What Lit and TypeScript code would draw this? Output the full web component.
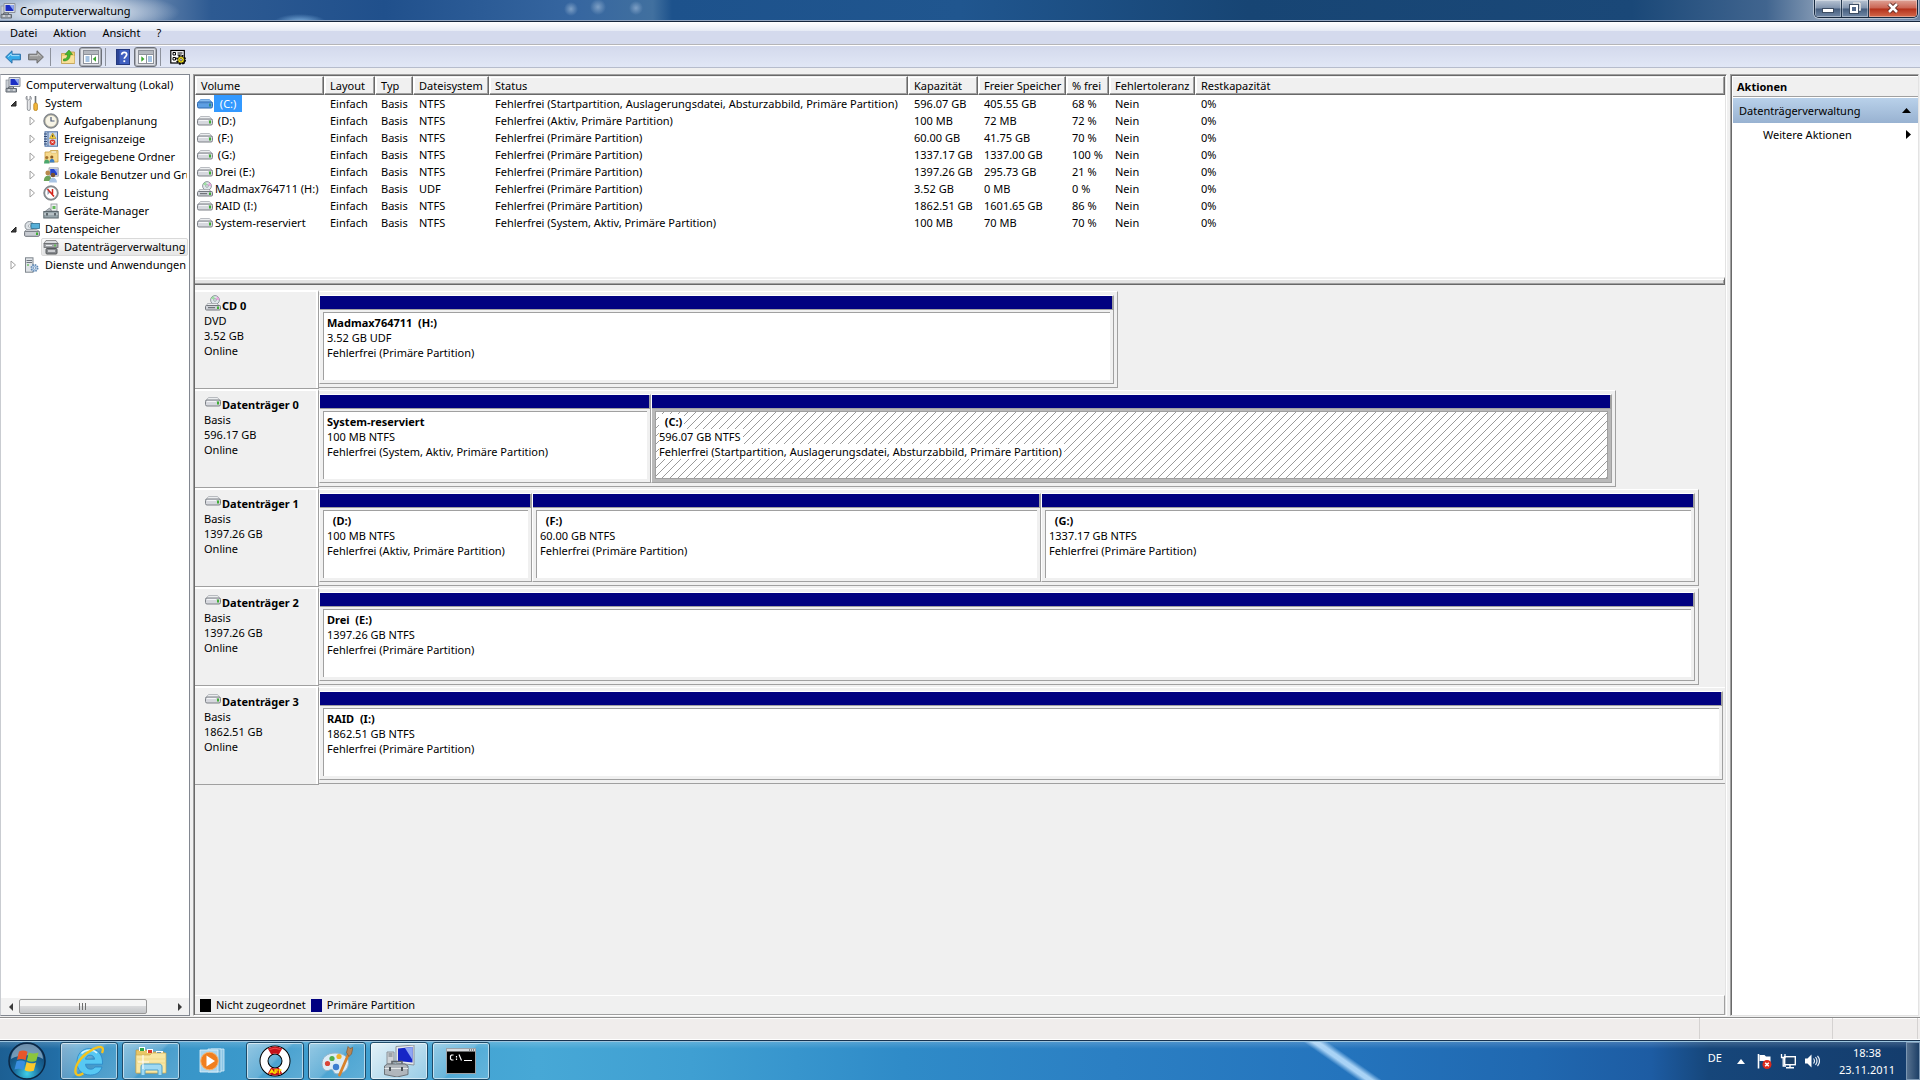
import { LitElement, html, css, svg, nothing, type TemplateResult } from "lit";
import { customElement, property } from "lit/decorators.js";
import { classMap } from "lit/directives/class-map.js";
import { styleMap } from "lit/directives/style-map.js";

/* ---------- icons ---------- */

const pic = (size: number, body: TemplateResult | TemplateResult[]) =>
  html`<svg class="ico" width=${size} height=${size} viewBox="0 0 ${size} ${size}" aria-hidden="true">${body}</svg>`;

const monitorBody = svg`
  <rect x="1" y="3" width="4" height="8" fill="#c9ced4" stroke="#7d858e" stroke-width=".6"/>
  <path d="M4 .5h11v9H4z" fill="#dfe3e8" stroke="#8a9099"/>
  <path d="M5.500 2h8v6h-8z" fill="#1c2fc4"/>
  <path d="M9.500 2h4v5.500z" fill="#8fa8f0"/>
  <path d="M1 11.500h10.500V15H1z" fill="#a4abb3" stroke="#646b73"/>
  <path d="M3.500 11.500V10h5v1.500" fill="none" stroke="#646b73"/>
  <path d="M3 13h2M8 13h2" stroke="#f4f4f4"/>`;

const driveBody = svg`
  <path d="M3.500 3.500h9l3 3.500H.5z" fill="#eceef0" stroke="#a9adb2" stroke-width=".8"/>
  <rect x=".5" y="6" width="15" height="6" rx="1.500" fill="#d6d8de" stroke="#7c8086"/>
  <path d="M2 7.500h9" stroke="#f5f6f8"/>
  <rect class="led" x="12" y="7.500" width="2" height="3" fill="#3fae35"/>`;

const discBody = svg`
  <circle cx="10" cy="5" r="4.400" fill="#dfe6ea" stroke="#8f979d"/>
  <path d="M10 5 12.500 1.500A4.400 4.400 0 0 1 14.300 5z" fill="#e8a6dc"/>
  <path d="M10 5 6 3.500A4.400 4.400 0 0 1 9 .9z" fill="#9ddfa0"/>
  <circle cx="10" cy="5" r="1.300" fill="#fff" stroke="#9aa"/>
  <path d="M2.500 8.500h9l3 2h-13z" fill="#eceef0" stroke="#9a9ea3" stroke-width=".7"/>
  <rect x=".5" y="10.500" width="15" height="4.500" rx="1" fill="#cfd2d8" stroke="#74787e"/>
  <path d="M3 12.700h7" stroke="#5c6066"/>
  <rect x="12" y="11.500" width="2" height="2.500" fill="#3fae35"/>`;

const icons = {
  computer: pic(16, monitorBody),
  drive: pic(16, driveBody),
  disc: pic(16, discBody),
  tools: pic(16, svg`
    <path d="M3 1v3l1.500 1L6 4V1c1.500.8 2 3 .3 4.700V14a1.500 1.500 0 0 1-3 0V5.700C1.500 4 1.700 1.800 3 1z" fill="#e6e8ea" stroke="#7d8288" stroke-width=".8"/>
    <path d="M11.500 1v7" stroke="#70757b" stroke-width="1.600"/>
    <rect x="9.800" y="8" width="3.600" height="7.500" rx="1.500" fill="#f3b73a" stroke="#b9811a" stroke-width=".8"/>`),
  clock: pic(16, svg`
    <circle cx="8" cy="8" r="7.300" fill="#8d9297" stroke="#62676c" stroke-width=".6"/>
    <circle cx="8" cy="8" r="5.800" fill="#f7f4e6" stroke="#c9c3a8" stroke-width=".6"/>
    <path d="M8 4v4h3.500" fill="none" stroke="#4d5a78" stroke-width="1.200"/>`),
  log: pic(16, svg`
    <rect x="2" y=".8" width="12.500" height="14.400" fill="#c8d7ea" stroke="#4b6ea4"/>
    <path d="M5 1v14" stroke="#4b6ea4"/>
    <path d="M1 3h3M1 5.500h3M1 8h3M1 10.500h3M1 13h3" stroke="#2f4875"/>
    <path d="m9.700 2 3.300 5.500H6.500z" fill="#f8d33c" stroke="#b58c12" stroke-width=".6"/>
    <path d="M9.700 3.800v2.400" stroke="#333"/>
    <circle cx="9.500" cy="11.200" r="2.800" fill="#d8362b"/><path d="m8.400 10.100 2.200 2.200m0-2.200-2.200 2.200" stroke="#fff" stroke-width=".9"/>`),
  share: pic(16, svg`
    <path d="M2 3h4.500l1-1.500H15V13H2z" fill="#f7d98c" stroke="#c89f41" stroke-width=".8"/>
    <path d="M8 2h5.500v2H8z" fill="#fff7d8" stroke="#c8a860" stroke-width=".5"/>
    <circle cx="3.800" cy="8.500" r="1.600" fill="#a5722e"/><path d="M1 14.500c0-5.500 5.600-5.500 5.600 0z" fill="#4ba86d"/>
    <circle cx="8.800" cy="8" r="1.600" fill="#8a5a22"/><path d="M6.500 13.500c0-5 5-5 5 0z" fill="#3f7fc4"/>`),
  users: pic(16, svg`
    <path d="M6 .8h9.300v8.400H6z" fill="#dde1e6" stroke="#8a9099" stroke-width=".7"/>
    <path d="M7.200 2h7v6h-7z" fill="#2444cc"/><path d="M11 2h3.200v4.500z" fill="#8fa8f0"/>
    <circle cx="4.800" cy="6" r="2.400" fill="#b98a4e"/><path d="M.8 14c0-7 8-7 8 0z" fill="#6ba35a"/>
    <circle cx="10" cy="8" r="2.300" fill="#7a5130"/><path d="M6 15.500c0-6.500 8-6.500 8 0z" fill="#a9c4e4"/>`),
  gauge: pic(16, svg`
    <circle cx="8" cy="8" r="7.300" fill="#8d9297" stroke="#62676c" stroke-width=".6"/>
    <circle cx="8" cy="8" r="5.800" fill="#fff"/>
    <path d="M4.500 5v5l3-3z" fill="#2b3f66" opacity=".5"/>
    <path d="m4.500 4 6.500 7.500M9.500 4v5" stroke="#d3231b" stroke-width="1.500"/>`),
  device: pic(16, svg`
    <rect x="8" y="1" width="6" height="7" fill="#eef0f2" stroke="#8b9197" stroke-width=".8"/>
    <path d="M9.500 3h3v3h-3z" fill="#63b95a"/>
    <path d="M2 8.500 6.500 5l2 3z" fill="#b9bec4" stroke="#767c82" stroke-width=".7"/>
    <rect x=".8" y="8.500" width="14.400" height="6.500" fill="#98a6ac" stroke="#5d686e"/>
    <path d="M1 11h14" stroke="#d5dbde"/><path d="M4 10v2.500M12 10v2.500" stroke="#3f484d" stroke-width="1.500"/>`),
  storage: pic(16, svg`
    <circle cx="5.500" cy="5" r="4.500" fill="#dde2e6" stroke="#868d94"/><circle cx="5.500" cy="5" r="1.200" fill="#fff" stroke="#868d94" stroke-width=".6"/>
    <rect x="7" y="2.500" width="8.500" height="5" fill="#57b0d8" stroke="#2f6f91" stroke-width=".8"/>
    <path d="M2.500 8.500h10l3 2H.5z" fill="#e4e6ea" stroke="#8d9299" stroke-width=".7"/>
    <rect x=".6" y="10.300" width="14.800" height="5" rx="1" fill="#c8ccd2" stroke="#6c7178"/>
    <rect x="12" y="11.500" width="2" height="2.500" fill="#3fae35"/>`),
  diskmgr: pic(16, svg`
    <path d="M3 1.500h10l2 3H1z" fill="#d8dadd" stroke="#777" stroke-width=".8"/>
    <rect x="1" y="4.500" width="14" height="4" fill="#a0a3a7" stroke="#66696d" stroke-width=".8"/>
    <path d="M3 6.500h6" stroke="#eceef0"/><path d="M12 5.500v2" stroke="#53c43d" stroke-width="1.500"/>
    <rect x="3" y="9.500" width="11" height="5.500" rx="1" fill="#85888c" stroke="#55585b"/>
    <path d="M1 9v6M5 12h7" stroke="#dfe1e3" stroke-width="1.500"/>`),
  server: pic(16, svg`
    <rect x="1.500" y=".8" width="7.500" height="14.400" fill="#dfe3e7" stroke="#7f868d"/>
    <path d="M2.500 3.500h5.500M2.500 5.500h5.500" stroke="#6d757d"/><path d="M3 8h2" stroke="#3fae35"/>
    <circle cx="10.500" cy="11" r="3.200" fill="#bdd3ea" stroke="#5f87b2" stroke-width="1.600" stroke-dasharray="1.500 1"/>
    <circle cx="10.500" cy="11" r="1.200" fill="#fff" stroke="#5f87b2" stroke-width=".7"/>`),
  back: pic(16, svg`<path d="M.6 8 7 1.800v3.400h8.400v5.600H7v3.400z" fill="#35a9e8" stroke="#2a6ea8"/><path d="M3 7.800 6.300 4.800v1.800h8" fill="none" stroke="#a4dcfa"/>`),
  forward: pic(16, svg`<path d="M15.400 8 9 1.800v3.400H.6v5.600H9v3.400z" fill="#9a9a9a" stroke="#6a6a6a"/><path d="M2 6.700h8V4.800l2.500 2.500" fill="none" stroke="#c9c9c9"/>`),
  folderUp: pic(16, svg`
    <path d="M1.500 4.500h5l1-1.500h7v11.500h-13z" fill="#f2cf72" stroke="#bd9a4a" stroke-width=".8"/>
    <path d="M2 7h12.300v7H2z" fill="#f9e09a"/>
    <path d="M3.500 10c3 0 4-1.500 4-4.500H5L9 1l3.500 4.500H10.200c0 4-2 6.500-6.700 6.500z" fill="#46b82f" stroke="#2d8420" stroke-width=".6"/>`),
  paneLeft: pic(16, svg`
    <rect x=".5" y="1.500" width="15" height="13" fill="#fff" stroke="#8d9199"/><path d="M1 2h14v3H1z" fill="#b3b7be"/>
    <path d="M1 5.500h14M8.500 6v8" stroke="#8d9199"/><path d="M2.500 8h4M2.500 10h4M2.500 12h4" stroke="#4a86c5"/>
    <path d="m9.800 10 3.200-2.800v5.600z" fill="#3aa52c"/>`),
  paneRight: pic(16, svg`
    <rect x=".5" y="1.500" width="15" height="13" fill="#fff" stroke="#8d9199"/><path d="M1 2h14v3H1z" fill="#b3b7be"/>
    <path d="M1 5.500h14M8.500 6v8" stroke="#8d9199"/><path d="M10 8h4M10 10h4M10 12h4" stroke="#4a86c5"/>
    <path d="M6.500 10 3.300 7.200v5.600z" fill="#3aa52c"/>`),
  help: pic(16, svg`
    <rect x="1.500" y=".5" width="13" height="15" fill="#3f5fc0" stroke="#24397f"/><path d="M2 1h2.500v14H2z" fill="#2b4496"/>
    <path d="M6.700 5.800c0-3.300 5-3 5-.2 0 2-2.400 1.900-2.400 4.200" fill="none" stroke="#fff" stroke-width="1.700"/><rect x="8.400" y="11.300" width="1.800" height="1.800" fill="#fff"/>`),
  settings: pic(16, svg`
    <rect x=".8" y="1.500" width="13.500" height="12.500" fill="#fff" stroke="#000" stroke-width="1.200"/>
    <path d="M3 3.500h2.500v2.500H3zM3 8.500h2.500v2.500H3z" fill="none" stroke="#000"/><path d="M7.500 4h5M7.500 6h4" stroke="#000"/>
    <circle cx="11" cy="10.800" r="3.800" fill="none" stroke="#000" stroke-width="2.400" stroke-dasharray="1.700 1.300"/>
    <circle cx="11" cy="10.800" r="3.300" fill="#f6e21c" stroke="#000" stroke-width=".6"/><circle cx="11" cy="10.800" r="1.200" fill="#fff" stroke="#000" stroke-width=".6"/>`),

  start: html`<svg class="ico" width="40" height="38" viewBox="0 0 40 38" aria-hidden="true">
    <defs><radialGradient id="orb" cx=".5" cy=".85" r=".8"><stop offset="0" stop-color="#3fd0e8"/><stop offset=".45" stop-color="#1a6c9e"/><stop offset="1" stop-color="#0f3b66"/></radialGradient></defs>
    <circle cx="20" cy="19" r="18" fill="url(#orb)" stroke="#0b2744" stroke-width="1.500"/>
    <path d="M4 17a16 15 0 0 1 32 0c-8-5-24-5-32 0z" fill="#cfe4f2" opacity=".5"/>
    <path d="M12 9.500c3-1.500 5.700-1.300 8.500.3l-2 8.400c-2.500-1.600-5.500-1.700-8.500-.4z" fill="#e8562a"/>
    <path d="M21.800 10.400c3 1.500 6 1.500 9.700.1l-2.200 8.300c-3 1.300-6.500 1.200-9.400-.3z" fill="#8cc63c"/>
    <path d="M9.600 19.300c3-1.300 6-1.200 8.600.4L16.200 28c-2.500-1.600-5.500-1.600-8.700-.4z" fill="#3a8ee0"/>
    <path d="M19.600 20c3 1.600 6.200 1.600 9.400.4L26.800 28.700c-3 1.200-6.300 1.100-9.200-.4z" fill="#fbc92d"/></svg>`,
  ie: pic(32, svg`
    <path d="M16.500 3.500C9 3.500 4 9 4 17s5 13 13.500 13c5.700 0 10-2.800 11.500-8h-7c-.8 1.400-2.200 2.200-4.300 2.200-3.100 0-5-1.900-5.200-5H29.500C30 10 25 3.500 16.500 3.500zM12.600 14.200c.4-2.500 2-4 4.500-4 2.600 0 4.200 1.500 4.500 4z" fill="#57c8f3" stroke="#2a86c8" stroke-width=".8"/>
    <path d="M8.500 8.500c3.500-4 12-4.500 15.500-.5" fill="none" stroke="#d6f4fe" stroke-width="1.600"/>
    <path d="M29 8C31 3.500 29.500 1 25 2.200 18 4 8.500 11 4.500 18.500 1 25.500 2 31 6.500 30c1.300-.3 2.500-.9 3.800-1.800" fill="none" stroke="#f4c31e" stroke-width="2.400"/>`),
  explorer: pic(32, svg`
    <path d="M1 5h10l2 2h16v21H1z" fill="#e9c766" stroke="#b99642" stroke-width=".7"/>
    <rect x="4" y="2" width="6" height="4" fill="#fff"/><rect x="5" y="3" width="4" height="3" fill="#2da747"/>
    <rect x="12" y="4" width="6" height="4" fill="#fff"/><rect x="13" y="5" width="4" height="3" fill="#d93a2b"/>
    <rect x="21" y="6" width="7" height="4" fill="#fff"/><rect x="22" y="7" width="4" height="2" fill="#3586d8"/>
    <path d="M1 10h14l2-2h14v20H1z" fill="#f8e7a4" stroke="#cfae57" stroke-width=".7"/>
    <path d="M1.500 14h29M1.500 18h29" stroke="#f0d98a"/>
    <path d="M6 30.500V22c0-2 1-3 3-3h15c2 0 3 1 3 3v8.500h-4V25H10v5.500z" fill="#9fd9f3" stroke="#4d9fc9"/>
    <path d="M8 10v14M3 17h11" stroke="#fff" stroke-width="1.200" opacity=".9"/>`),
  media: pic(32, svg`
    <path d="M14 4h13v22H14z" fill="#8cc6e6" stroke="#d6eef9" stroke-width=".8"/>
    <path d="M11 4h13v23H11z" fill="#70b4da" stroke="#d6eef9" stroke-width=".8"/>
    <path d="M3 5h18v22H3z" fill="#a8d5ee" stroke="#e3f4fc" stroke-width=".8"/>
    <circle cx="12.500" cy="16" r="8.800" fill="#f07f1f" stroke="#f8b36d"/><path d="M9.500 10.500v11l8.500-5.500z" fill="#fff"/>`),
  ring: pic(32, svg`
    <circle cx="16" cy="16" r="11" fill="none" stroke="#000" stroke-width="9"/>
    <circle cx="16" cy="16" r="11" fill="none" stroke="#fff" stroke-width="7"/>
    <path d="M10.500 6.500a11 11 0 0 1 11 0M21.500 25.500a11 11 0 0 1-11 0" fill="none" stroke="#c4121a" stroke-width="7"/>
    <path d="M10.500 4.500a13 13 0 0 1 11 0" fill="none" stroke="#f24b4b"/>
    <path d="m10.500 28.500 2.300-3.500 2.300 3.500M11.500 27h3M16 29v-4h3M16 27h2.500M20.500 24.500v4M19.500 25h3" fill="none" stroke="#ffe600" stroke-width="1.300"/>`),
  paint: pic(32, svg`
    <path d="M14 8C6 8 1 12.500 1 18.500S5 27 8.500 25c2.500-1.500 4 .5 4.500 2.500 1 3 14 1.500 14.500-9C27.800 11.500 22 8 14 8z" fill="#dcecf6" stroke="#8fb3c9"/>
    <circle cx="6.500" cy="18.500" r="2.600" fill="#d94436"/><circle cx="11" cy="13.500" r="2.600" fill="#4fae4b"/>
    <circle cx="18" cy="11.500" r="2.600" fill="#f2b22b"/><circle cx="15" cy="22" r="3.200" fill="#3c7dd0"/>
    <path d="M28 8 18.500 30" stroke="#d9822b" stroke-width="2.800" stroke-linecap="round"/>
    <path d="m25.500 7.500 1.500-6 2 2 3-1-1.500 6.500-2.500 2.500z" fill="#b98553" stroke="#7a522c" stroke-width=".6"/>`),
  toolbox: pic(32, svg`
    <path d="M13 1.500 31 0v20l-18-2z" fill="#e6e9ec" stroke="#8c939a"/><path d="M15 3.500 29.500 2v15.500L15 16z" fill="#1626c6"/>
    <path d="M22 3 29.500 2v13z" fill="#8ea5f4"/>
    <path d="M4 7h7v12H4z" fill="#cfd3d7" stroke="#8c939a"/><path d="M5.500 9h4M5.500 11h4" stroke="#6d747b"/>
    <path d="M9 20v-3.500h10V20" fill="none" stroke="#5e656b" stroke-width="1.600"/>
    <path d="m1.500 21 3-2H22l3 2v8.500L14 32 1.500 29.500z" fill="#b0b6bc" stroke="#6b7278"/><path d="M1.500 23.500H25" stroke="#e6e9eb"/>
    <path d="M7 22v4M19 22v4" stroke="#4b5258" stroke-width="2"/>`),
  shell: html`<svg class="ico" width="32" height="32" viewBox="0 0 32 32" aria-hidden="true">
    <rect x="1.500" y="3.500" width="29" height="25" fill="#000" stroke="#9ba1a7"/><path d="M2 4h28v2.500H2z" fill="#d7dadd"/>
    <path d="M24 5h1M26 5h1M28 5h1" stroke="#333"/>
    <path d="M8.500 10H6.500L5.500 11v3l1 1h2M11.500 11v1.500M11.500 13.500V15M14 9.500l2.500 6M19 15.500h8" fill="none" stroke="#fff" stroke-width="1.200"/></svg>`,
  flag: pic(16, svg`
    <path d="M2.500 1v14.500" stroke="#fff" stroke-width="1.600"/><path d="M3.500 2h5l1.500 1.500h4.500v6H9L7.500 8h-4z" fill="#fff"/>
    <circle cx="11" cy="11.500" r="4.500" fill="#dd2a1b"/><path d="m9.200 9.700 3.600 3.600m0-3.600-3.600 3.600" stroke="#fff" stroke-width="1.500"/>`),
  network: pic(16, svg`
    <rect x="4.700" y="3.700" width="10.600" height="8" fill="#1b3f66" stroke="#fff" stroke-width="1.400"/>
    <path d="M10 12v2.500M6 14.800h8" stroke="#fff" stroke-width="1.400"/>
    <path d="M1.500 1v3.500h3.500V1M3.200 4.500V13H6" fill="none" stroke="#fff" stroke-width="1.300"/>`),
  sound: pic(16, svg`
    <path d="M1 5.500h2.500L7.500 1.500v13L3.500 10.500H1z" fill="#fff"/>
    <path d="M9.500 5.500q2 2.500 0 5M11.500 4q3 4 0 8M13.500 2.800q4 5.200 0 10.400" fill="none" stroke="#e6eef6" stroke-width="1.200"/>`),
};

type IconName = keyof typeof icons;

const base = css`
  *, *::before, *::after { box-sizing: border-box; }
  button {
    font: inherit; color: inherit; background: none; border: 0; padding: 0; margin: 0;
    text-align: left; cursor: default;
  }
  .ico { display: block; flex: none; }
  ul { list-style: none; margin: 0; padding: 0; }
`;

/* ---------- console tree ---------- */

interface TreeNode { label: string; icon: IconName; level: number; open?: boolean; leaf?: boolean; selected?: boolean; }

const TREE: TreeNode[] = [
  { label: "Computerverwaltung (Lokal)", icon: "computer", level: 0, leaf: true },
  { label: "System", icon: "tools", level: 1, open: true },
  { label: "Aufgabenplanung", icon: "clock", level: 2 },
  { label: "Ereignisanzeige", icon: "log", level: 2 },
  { label: "Freigegebene Ordner", icon: "share", level: 2 },
  { label: "Lokale Benutzer und Gruppen", icon: "users", level: 2 },
  { label: "Leistung", icon: "gauge", level: 2 },
  { label: "Geräte-Manager", icon: "device", level: 2, leaf: true },
  { label: "Datenspeicher", icon: "storage", level: 1, open: true },
  { label: "Datenträgerverwaltung", icon: "diskmgr", level: 2, leaf: true, selected: true },
  { label: "Dienste und Anwendungen", icon: "server", level: 1 },
];

@customElement("console-tree")
export class ConsoleTree extends LitElement {
  static styles = [base, css`
    :host { display: flex; flex-direction: column; background: #fff; border: 1px solid #828790; border-left-color: #c9ccd1; overflow: hidden; }
    .nodes { flex: 1; padding: 1px; }
    .node { display: flex; align-items: center; height: 18px; white-space: nowrap; }
    .l0 { padding-left: 1px; }
    .l1 { padding-left: 2px; }
    .l2 { padding-left: 21px; }
    .twist { width: 18px; flex: none; display: flex; justify-content: center; }
    .l0 .twist { display: none; }
    .item { display: flex; align-items: center; height: 18px; gap: 5px; padding: 0 1px; border: 1px solid transparent; flex: 1; min-width: 0; overflow: hidden; }
    .selected { border-color: #d9d9d9; border-radius: 2px; background: linear-gradient(#fafafa, #e6e6e6); }
    .bar { display: flex; align-items: center; height: 17px; background: #f2f2f2; padding: 0 1px; }
    .step { width: 17px; height: 17px; display: flex; align-items: center; justify-content: center; }
    .track { flex: 1; display: flex; height: 15px; }
    .thumb {
      width: 84%; height: 15px; border: 1px solid #979797; border-radius: 2px;
      background: linear-gradient(#f5f5f5 0 45%, #d9dadc 50%, #c4c6c9);
      display: flex; align-items: center; justify-content: center;
    }
  `];

  private twist(n: TreeNode) {
    if (n.leaf) return nothing;
    return n.open
      ? html`<svg width="8" height="8" viewBox="0 0 8 8" aria-hidden="true"><path d="M7 2v5H2z" fill="#404040" stroke="#222"/></svg>`
      : html`<svg width="8" height="10" viewBox="0 0 8 10" aria-hidden="true"><path d="M2 1v8l4.500-4z" fill="#fff" stroke="#a0a0a0"/></svg>`;
  }

  render() {
    return html`
      <ul class="nodes">
        ${TREE.map((n) => html`
          <li class="node l${n.level}">
            <span class="twist">${this.twist(n)}</span>
            <button class=${classMap({ item: true, selected: !!n.selected })}>${icons[n.icon]}<span>${n.label}</span></button>
          </li>`)}
      </ul>
      <div class="bar">
        <button class="step" aria-label="Links"><svg width="6" height="8" viewBox="0 0 6 8"><path d="M5 0v8L1 4z" fill="#3a3a3a"/></svg></button>
        <div class="track"><div class="thumb"><svg width="9" height="7" viewBox="0 0 9 7" aria-hidden="true"><path d="M1.500 0v7M4.500 0v7M7.500 0v7" stroke="#6d6d6d"/></svg></div></div>
        <button class="step" aria-label="Rechts"><svg width="6" height="8" viewBox="0 0 6 8"><path d="M1 0v8l4-4z" fill="#3a3a3a"/></svg></button>
      </div>`;
  }
}

/* ---------- volume list ---------- */

const COLUMNS: [string, number][] = [
  ["Volume", 129], ["Layout", 51], ["Typ", 38], ["Dateisystem", 76], ["Status", 419],
  ["Kapazität", 70], ["Freier Speicher", 88], ["% frei", 43], ["Fehlertoleranz", 86], ["Restkapazität", 0],
];

const VOLUMES: string[][] = [
  ["\u00a0(C:)", "Einfach", "Basis", "NTFS", "Fehlerfrei (Startpartition, Auslagerungsdatei, Absturzabbild, Primäre Partition)", "596.07 GB", "405.55 GB", "68 %", "Nein", "0%"],
  ["\u00a0(D:)", "Einfach", "Basis", "NTFS", "Fehlerfrei (Aktiv, Primäre Partition)", "100 MB", "72 MB", "72 %", "Nein", "0%"],
  ["\u00a0(F:)", "Einfach", "Basis", "NTFS", "Fehlerfrei (Primäre Partition)", "60.00 GB", "41.75 GB", "70 %", "Nein", "0%"],
  ["\u00a0(G:)", "Einfach", "Basis", "NTFS", "Fehlerfrei (Primäre Partition)", "1337.17 GB", "1337.00 GB", "100 %", "Nein", "0%"],
  ["Drei (E:)", "Einfach", "Basis", "NTFS", "Fehlerfrei (Primäre Partition)", "1397.26 GB", "295.73 GB", "21 %", "Nein", "0%"],
  ["Madmax764711 (H:)", "Einfach", "Basis", "UDF", "Fehlerfrei (Primäre Partition)", "3.52 GB", "0 MB", "0 %", "Nein", "0%"],
  ["RAID (I:)", "Einfach", "Basis", "NTFS", "Fehlerfrei (Primäre Partition)", "1862.51 GB", "1601.65 GB", "86 %", "Nein", "0%"],
  ["System-reserviert", "Einfach", "Basis", "NTFS", "Fehlerfrei (System, Aktiv, Primäre Partition)", "100 MB", "70 MB", "70 %", "Nein", "0%"],
];

@customElement("volume-list")
export class VolumeList extends LitElement {
  static styles = [base, css`
    :host { display: block; background: #fff; }
    table { width: 100%; border-collapse: separate; border-spacing: 0; table-layout: fixed; }
    th, td { white-space: nowrap; font-weight: 400; text-align: left; padding: 0 0 0 6px; }
    th {
      height: 19px; background: #f0f0f0; line-height: 16px; padding-left: 5px;
      border: 1px solid; border-color: #f0f0f0 #696969 #696969 #fff;
      box-shadow: inset -1px -1px #a0a0a0, inset 1px 1px #fff;
    }
    td { height: 17px; line-height: 17px; }
    td:first-child { padding-left: 2px; }
    .name { display: flex; align-items: center; gap: 1px; height: 17px; }
    .name span { padding: 0 1px; }
    .active span { background: #3399ff; color: #fff; padding: 0 6px 0 3px; }
    .active .ico path { fill: #8cc0f2; stroke: #5a96d6; }
    .active .ico rect { fill: #5d9fe4; stroke: #2f68ae; }
    .active .ico .led { fill: #2f8f86; stroke: none; }
  `];

  render() {
    return html`
      <table>
        <colgroup>${COLUMNS.map(([, w]) => html`<col style=${styleMap(w ? { width: `${w}px` } : {})}>`)}</colgroup>
        <thead><tr>${COLUMNS.map(([c]) => html`<th scope="col">${c}</th>`)}</tr></thead>
        <tbody>
          ${VOLUMES.map((row, r) => html`<tr>${row.map((cell, c) => c === 0
            ? html`<td><div class=${classMap({ name: true, active: r === 0 })}>${row[3] === "UDF" ? icons.disc : icons.drive}<span>${cell}</span></div></td>`
            : html`<td>${cell}</td>`)}</tr>`)}
        </tbody>
      </table>`;
  }
}

/* ---------- graphical disk view ---------- */

interface Partition { name: string; size: string; state: string; share: number; selected?: boolean; }
interface Disk { name: string; kind: string; size: string; icon: IconName; extent: number; parts: Partition[]; }

const FULL_EXTENT = 1406;

const DISKS: Disk[] = [
  { name: "CD 0", kind: "DVD", size: "3.52 GB", icon: "disc", extent: 799, parts: [
    { name: "Madmax764711\u00a0 (H:)", size: "3.52 GB UDF", state: "Fehlerfrei (Primäre Partition)", share: 1 }] },
  { name: "Datenträger 0", kind: "Basis", size: "596.17 GB", icon: "drive", extent: 1297, parts: [
    { name: "System-reserviert", size: "100 MB NTFS", state: "Fehlerfrei (System, Aktiv, Primäre Partition)", share: 332 },
    { name: "\u00a0\u00a0(C:)", size: "596.07 GB NTFS", state: "Fehlerfrei (Startpartition, Auslagerungsdatei, Absturzabbild, Primäre Partition)", share: 961, selected: true }] },
  { name: "Datenträger 1", kind: "Basis", size: "1397.26 GB", icon: "drive", extent: 1380, parts: [
    { name: "\u00a0\u00a0(D:)", size: "100 MB NTFS", state: "Fehlerfrei (Aktiv, Primäre Partition)", share: 213 },
    { name: "\u00a0\u00a0(F:)", size: "60.00 GB NTFS", state: "Fehlerfrei (Primäre Partition)", share: 509 },
    { name: "\u00a0\u00a0(G:)", size: "1337.17 GB NTFS", state: "Fehlerfrei (Primäre Partition)", share: 654 }] },
  { name: "Datenträger 2", kind: "Basis", size: "1397.26 GB", icon: "drive", extent: 1380, parts: [
    { name: "Drei\u00a0 (E:)", size: "1397.26 GB NTFS", state: "Fehlerfrei (Primäre Partition)", share: 1 }] },
  { name: "Datenträger 3", kind: "Basis", size: "1862.51 GB", icon: "drive", extent: 1406, parts: [
    { name: "RAID\u00a0 (I:)", size: "1862.51 GB NTFS", state: "Fehlerfrei (Primäre Partition)", share: 1 }] },
];

@customElement("disk-row")
export class DiskRow extends LitElement {
  @property({ attribute: false }) disk!: Disk;

  static styles = [base, css`
    :host { display: flex; height: 99px; line-height: 15px; }
    .label { width: 124px; flex: none; padding: 5px 0 0 9px; border-top: 2px solid #fff; border-bottom: 1px solid #a0a0a0; border-right: 1px solid #a0a0a0; box-shadow: inset -2px 0 #fff; }
    .title { display: flex; align-items: flex-end; gap: 1px; font-weight: 700; height: 16px; }
    .title .ico { margin: 0 0 2px 1px; }
    .map { flex: 1; display: grid; min-width: 0; }
    .disk { display: grid; padding: 3px 3px 3px 0; margin: 1px 0 1px; border-top: 1px solid #fff; border-right: 1px solid #a0a0a0; border-bottom: 1px solid #a0a0a0; min-width: 0; }
    .full { padding-right: 2px; border-right: 0; }
    .part { display: flex; flex-direction: column; min-width: 0; text-align: left; border: 1px solid; border-color: #fff #a0a0a0 #a0a0a0 #fff; white-space: nowrap; }
    .stripe { height: 14px; width: 100%; background: #000080; border-right: 1px solid #a0a0a0; border-bottom: 1px solid #a0a0a0; }
    .frame { flex: 1; width: 100%; padding: 2px 3px 3px 3px; display: flex; }
    .body { flex: 1; min-width: 0; overflow: hidden; display: flex; flex-direction: column; align-items: flex-start; background: #fff; border-top: 1px solid #a0a0a0; border-left: 1px solid #a0a0a0; padding: 2px 0 0 3px; }
    .selected .frame { background: #b9b9b9; }
    .selected .body {
      border: 1px solid #a0a0a0;
      background: #fff linear-gradient(135deg, transparent 45%, #9a9a9a 45% 55%, transparent 55%) 0 0 / 8px 8px;
    }
    .selected .body span { background: #fff; padding-right: 2px; }
    .name { font-weight: 700; }
  `];

  render() {
    const d = this.disk;
    const full = d.extent >= FULL_EXTENT;
    const cols = full ? "1fr" : `${d.extent}fr ${FULL_EXTENT - d.extent}fr`;
    return html`
      <div class="label">
        <div class="title">${icons[d.icon]}<span>${d.name}</span></div>
        <div>${d.kind}</div><div>${d.size}</div><div>Online</div>
      </div>
      <div class="map" style=${styleMap({ gridTemplateColumns: cols })}>
        <div class=${classMap({ disk: true, full })} style=${styleMap({ gridTemplateColumns: d.parts.map((p) => `${p.share}fr`).join(" ") })}>
          ${d.parts.map((p) => html`
            <button class=${classMap({ part: true, selected: !!p.selected })}>
              <span class="stripe"></span>
              <span class="frame"><span class="body"><span class="name">${p.name}</span><span>${p.size}</span><span>${p.state}</span></span></span>
            </button>`)}
        </div>
      </div>`;
  }
}

/* ---------- taskbar ---------- */

const TASKS: { icon: IconName; label: string; state: string }[] = [
  { icon: "ie", label: "Internet Explorer", state: "open" },
  { icon: "explorer", label: "Windows-Explorer", state: "open" },
  { icon: "media", label: "Windows Media Player", state: "pinned" },
  { icon: "ring", label: "Hilfsprogramm", state: "open" },
  { icon: "paint", label: "Paint", state: "open" },
  { icon: "toolbox", label: "Computerverwaltung", state: "open current" },
  { icon: "shell", label: "Eingabeaufforderung", state: "open" },
];

@customElement("task-bar")
export class TaskBar extends LitElement {
  static styles = [base, css`
    :host {
      display: flex; height: 40px; color: #fff; border-top: 1px solid #17324f; box-shadow: inset 0 1px #9cc4de;
      background:
        linear-gradient(#ffffff30, #ffffff00 20%),
        linear-gradient(35deg, transparent 42%, #a9d3f6 48% 52%, transparent 58%) 71% 0 / 100px 100% no-repeat,
        linear-gradient(90deg, #1c5f93 0, #226ea6 3%, #3490c4 4%, #3c9acc 14%, #47a8d6 28%, #3f9fd2 36%, #2f8bc8 47%, #2b7fc3 58%, #2474bd 70%, #2068b0 80%, #1d5ca3 86%, #16467a 89%, #143c6c 100%);
    }
    .start { width: 60px; display: flex; align-items: center; padding-left: 7px; }
    .tasks { display: flex; gap: 4px; flex: 1; }
    .task { width: 58px; height: 38px; margin-top: 1px; display: flex; align-items: center; justify-content: center; border: 1px solid transparent; border-radius: 3px; }
    .open { border-color: #1d4a68; box-shadow: inset 0 0 0 1px #ffffff8c; background: linear-gradient(135deg, #ffffff73, #ffffff38 48%, #ffffff14 52%, #ffffff2b); }
    .current { background: linear-gradient(135deg, #ffffffd9, #ffffffa6 50%, #ffffff73); }
    .tray { display: flex; align-items: center; gap: 8px; }
    .lang { padding: 0 6px 6px 0; }
    .up { width: 10px; display: flex; justify-content: center; padding-top: 2px; }
    .up + button { margin-left: 2px; }
    .clock { width: 78px; text-align: center; line-height: 17px; }
    .peek { width: 14px; align-self: stretch; margin-top: 1px; border: 1px solid #7c97b3; background: linear-gradient(90deg, #56718f, #1d3f66); }
  `];

  render() {
    return html`
      <button class="start" aria-label="Start">${icons.start}</button>
      <div class="tasks">${TASKS.map((t) => html`<button class="task ${t.state}" aria-label=${t.label}>${icons[t.icon]}</button>`)}</div>
      <div class="tray">
        <button class="lang">DE</button>
        <button class="up" aria-label="Ausgeblendete Symbole"><svg width="8" height="5" viewBox="0 0 8 5"><path d="M0 5h8L4 0z" fill="#fff"/></svg></button>
        <button aria-label="Wartungscenter">${icons.flag}</button>
        <button aria-label="Netzwerk">${icons.network}</button>
        <button aria-label="Lautstärke">${icons.sound}</button>
        <button class="clock"><div>18:38</div><div>23.11.2011</div></button>
      </div>
      <button class="peek" aria-label="Desktop anzeigen"></button>`;
  }
}

/* ---------- window ---------- */

@customElement("app-root")
export class AppRoot extends LitElement {
  static styles = [base, css`
    :host {
      display: flex; flex-direction: column; min-height: 100vh; background: #f0f0f0; color: #000;
      font: 11px/16px "Noto Sans", "Open Sans", sans-serif; box-sizing: border-box; overflow: hidden;
    }
    .titlebar {
      display: flex; align-items: center; height: 22px; padding: 0 2px 0 0; border-bottom: 1px solid #14253c; box-shadow: inset 0 -1px #8fa3be;
      background:
        radial-gradient(ellipse 110px 22px at 70px 12px, #d3ddea 0 40%, #d3ddea00 100%),
        radial-gradient(ellipse 26px 8px at 300px 22px, #7fb2e0 0, #7fb2e000 100%),
        radial-gradient(ellipse 7px 7px at 571px 9px, #7d9fc5 0, #7d9fc500 100%),
        radial-gradient(ellipse 8px 8px at 598px 7px, #7d9fc5 0, #7d9fc500 100%),
        radial-gradient(ellipse 7px 7px at 636px 8px, #7d9fc5 0, #7d9fc500 100%),
        linear-gradient(90deg, #8ea5c2 0, #5f80aa 8%, #2d5a92 11%, #20508c 20%, #3666a0 30%, #41709f 34%, #1d528c 35%, #20568f 50%, #174574 65%, #1a4878 85%, #41658f 92%, #8b9fb8 95%, #6c84a4 100%);
    }
    .caption { display: flex; align-items: center; gap: 4px; flex: 1; height: 20px; }
    .caption h1 { font: inherit; margin: 0; }
    .controls { display: flex; height: 18px; margin-bottom: 4px; border: 1px solid #16283e; border-top: 0; border-radius: 0 0 5px 5px; overflow: hidden; box-shadow: 0 0 0 1px #ffffff70; }
    .ctl { width: 27px; display: flex; align-items: center; justify-content: center; background: linear-gradient(#b9c5d4, #8093ad 48%, #455d7d 52%, #7188a6); border-right: 1px solid #24384f; box-shadow: inset 0 0 0 1px #ffffff5c; }
    .close { width: 48px; border-right: 0; background: linear-gradient(#dfa397, #ca6351 48%, #b3301a 52%, #d4694b); }
    .menubar { display: flex; height: 23px; align-items: center; padding: 0 4px; background: linear-gradient(#fff, #e6ebf5 40%, #d4daed 42%, #d4daed); border-bottom: 1px solid #b5b5b8; }
    .menubar button { padding: 0 6px; margin-right: 4px; height: 22px; }
    .toolbar { display: flex; height: 23px; align-items: center; padding: 0 1px; background: linear-gradient(#d3d9ec, #e1e7f6); border-top: 1px solid #fff; border-bottom: 1px solid #b6bccc; }
    .tool { width: 23px; height: 20px; display: flex; align-items: center; justify-content: center; border: 1px solid transparent; border-radius: 3px; }
    .pressed { border-color: #6c7079; background: #dfe1e6; box-shadow: inset 0 0 0 1px #a9adb6; }
    .sep { width: 1px; height: 18px; background: #8d929d; margin: 0 5px 0 3px; }
    .work { flex: 1; display: grid; grid-template-columns: 190px minmax(0, 1fr) 189px; gap: 3px; padding: 6px 1px 1px 0; }
    .center { display: flex; flex-direction: column; border: 1px solid; border-color: #a0a0a0 #fff #fff #a0a0a0; box-shadow: inset 1px 1px #696969, inset -1px -1px #e3e3e3; padding: 1px 1px 0 1px; }
    .volumes { height: 201px; }
    .splitter { height: 8px; border-top: 2px solid #f0f0f0; border-bottom: 1px solid #696969; border-right: 1px solid #696969; background: #e3e3e3; box-shadow: inset 0 1px #fff, inset -1px -1px #a0a0a0; }
    .graph { flex: 1; padding-top: 5px; display: flex; flex-direction: column; }
    .disks { flex: 1; }
    .legend { display: flex; align-items: center; gap: 5px; height: 20px; padding-left: 5px; border: 1px solid #a0a0a0; border-top-color: #fff; border-left: 0; }
    .swatch { width: 11px; height: 13px; }
    .free { background: #000; }
    .primary { background: #000080; }
    .actions { background: #fff; border: 1px solid; border-color: #a0a0a0 #e3e3e3 #e3e3e3 #a0a0a0; box-shadow: inset 1px 1px #696969; padding: 2px 0 0 2px; }
    .actions h2 { font: inherit; font-weight: 700; margin: 0; height: 20px; line-height: 20px; padding-left: 4px; background: #f0f0f0; border-bottom: 1px solid #a0a0a0; }
    .group { display: flex; width: 100%; align-items: center; justify-content: space-between; height: 25px; margin-top: 1px; padding: 0 7px 0 6px; background: linear-gradient(#b9d1ea, #98b2d1); }
    .more { display: flex; width: 100%; align-items: center; justify-content: space-between; height: 23px; padding: 0 7px 0 30px; }
    .status { display: flex; height: 23px; border-top: 1px solid #8c8c8c; border-bottom: 1px solid #fff; background: #f0edec; box-shadow: inset 0 1px #fff; justify-content: flex-end; padding-right: 2px; }
    .cell { border-left: 1px solid #d5d2d1; width: 133px; }
    .cell:last-child { width: 86px; border-right: 1px solid #d5d2d1; }
  `];

  render() {
    return html`
      <header class="titlebar">
        <div class="caption">${icons.computer}<h1>Computerverwaltung</h1></div>
        <div class="controls">
          <button class="ctl" aria-label="Minimieren"><svg width="12" height="12" viewBox="0 0 12 12"><rect x=".5" y="6.500" width="11" height="4" fill="#fff" stroke="#3d4d63"/></svg></button>
          <button class="ctl" aria-label="Verkleinern"><svg width="12" height="12" viewBox="0 0 12 12"><path d="M4 1h7v7H9" fill="none" stroke="#3d4d63" stroke-width="3"/><path d="M4 1h7v7H9" fill="none" stroke="#fff" stroke-width="1.500"/><rect x="2" y="4" width="6" height="6" fill="#53698a" stroke="#3d4d63" stroke-width="4"/><rect x="2" y="4" width="6" height="6" fill="#53698a" stroke="#fff" stroke-width="2"/></svg></button>
          <button class="ctl close" aria-label="Schließen"><svg width="12" height="12" viewBox="0 0 12 12"><path d="m2 2 8 8m0-8-8 8" stroke="#5b2620" stroke-width="4.500"/><path d="m2 2 8 8m0-8-8 8" stroke="#fff" stroke-width="2.600"/></svg></button>
        </div>
      </header>
      <nav class="menubar"><button>Datei</button><button>Aktion</button><button>Ansicht</button><button>?</button></nav>
      <div class="toolbar" role="toolbar">
        <button class="tool" aria-label="Zurück">${icons.back}</button>
        <button class="tool" aria-label="Vorwärts">${icons.forward}</button>
        <span class="sep"></span>
        <button class="tool" aria-label="Eine Ebene nach oben">${icons.folderUp}</button>
        <button class="tool pressed" aria-label="Konsolenstruktur">${icons.paneLeft}</button>
        <span class="sep"></span>
        <button class="tool" aria-label="Hilfe">${icons.help}</button>
        <button class="tool pressed" aria-label="Aktionsbereich">${icons.paneRight}</button>
        <span class="sep"></span>
        <button class="tool" aria-label="Einstellungen">${icons.settings}</button>
      </div>
      <main class="work">
        <console-tree></console-tree>
        <section class="center">
          <volume-list class="volumes"></volume-list>
          <div class="splitter"></div>
          <div class="graph">
            <div class="disks">${DISKS.map((d) => html`<disk-row .disk=${d}></disk-row>`)}</div>
            <div class="legend">
              <span class="swatch free"></span><span>Nicht zugeordnet</span>
              <span class="swatch primary"></span><span>Primäre Partition</span>
            </div>
          </div>
        </section>
        <aside class="actions">
          <h2>Aktionen</h2>
          <button class="group"><span>Datenträgerverwaltung</span><svg width="9" height="5" viewBox="0 0 9 5" aria-hidden="true"><path d="M0 5h9L4.500 0z"/></svg></button>
          <button class="more"><span>Weitere Aktionen</span><svg width="5" height="9" viewBox="0 0 5 9" aria-hidden="true"><path d="M0 0v9l5-4.500z"/></svg></button>
        </aside>
      </main>
      <footer class="status"><span class="cell"></span><span class="cell"></span></footer>
      <task-bar></task-bar>`;
  }
}
